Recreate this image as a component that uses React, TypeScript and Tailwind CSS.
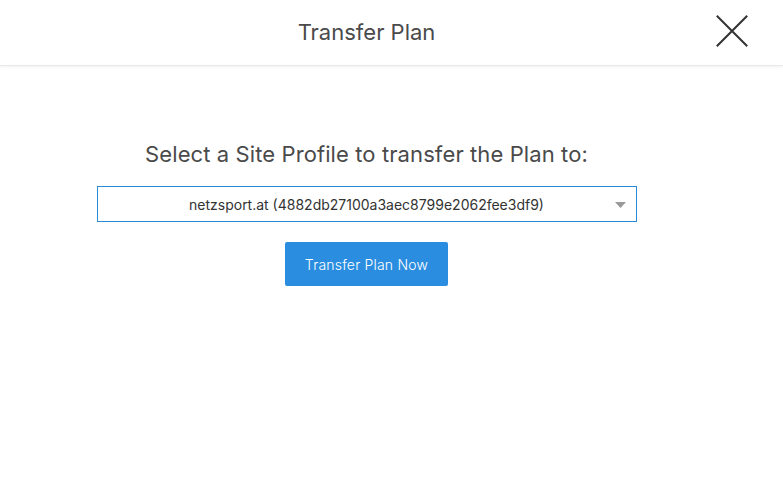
export default function App() {
  return (
    <div className="h-[503px] w-[783px] bg-white font-['Inter','Liberation_Sans',sans-serif] text-[#444]">
      {/* Header */}
      <div className="relative flex h-[66px] w-full items-center border-b border-[#e8e8e8] shadow-[0_1px_3px_rgba(0,0,0,0.06)]">
        <div className="flex w-[733px] justify-center">
          <h1 className="text-[22px] font-normal tracking-[0px] text-[#4a4a4a]">Transfer Plan</h1>
        </div>
        <button className="absolute left-[716px] top-[15px] flex h-[32px] w-[32px] items-center justify-center">
          <svg width="32" height="32" viewBox="0 0 32 32">
            <path d="M1.5 1.5 L30.5 30.5 M30.5 1.5 L1.5 30.5" stroke="#333" strokeWidth="2" strokeLinecap="square" />
          </svg>
        </button>
      </div>

      {/* Body */}
      <div className="flex w-[733px] flex-col items-center pt-[73px]">
        <h2 className="text-[22px] font-normal leading-[30px] tracking-[0.1px] text-[#4a4a4a]">
          Select a Site Profile to transfer the Plan to:
        </h2>
        <div className="relative mt-[17px] flex h-[36px] w-[540px] items-center justify-center border border-[#2a8ad8] bg-white">
          <span className="text-[14px] text-[#333]">netzsport.at (4882db27100a3aec8799e2062fee3df9)</span>
          <svg className="absolute right-[10px] top-[15px]" width="11" height="6" viewBox="0 0 11 6">
            <path d="M0 0 L11 0 L5.5 6 Z" fill="#999" />
          </svg>
        </div>
        <button className="mt-[20px] h-[44px] w-[163px] rounded-[2px] bg-[#2a8de0] text-[14px] font-light tracking-[0.2px] text-white">
          Transfer Plan Now
        </button>
      </div>
    </div>
  );
}
